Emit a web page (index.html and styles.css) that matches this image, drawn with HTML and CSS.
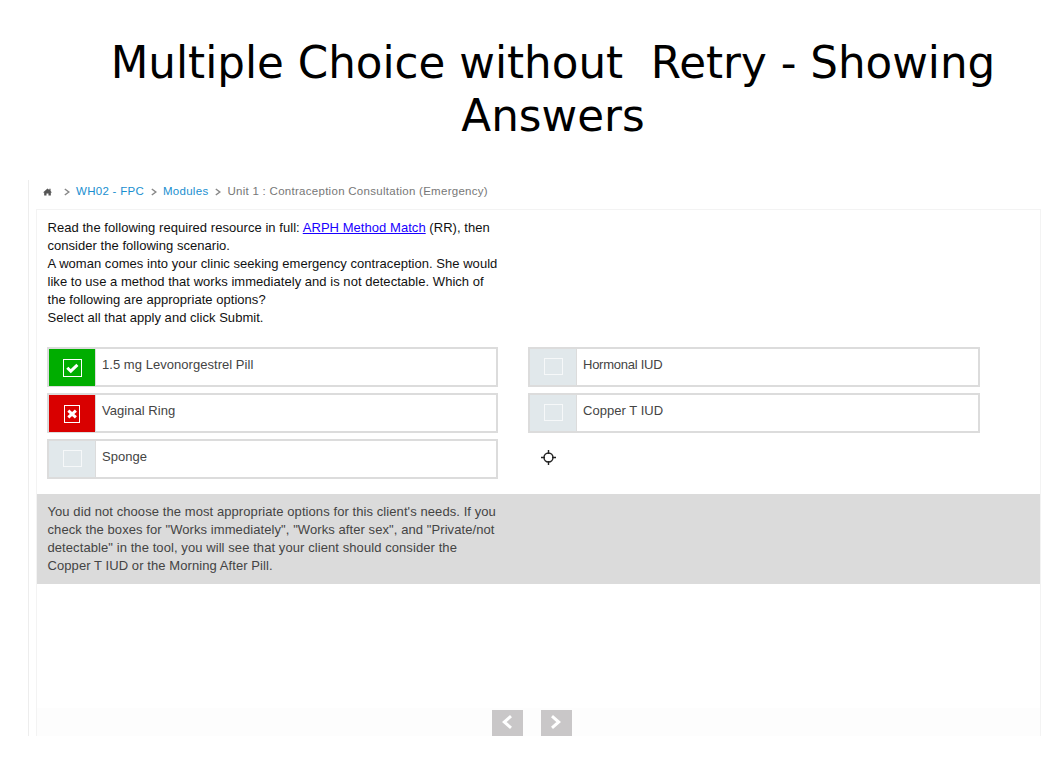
FILE: index.html
```html
<!DOCTYPE html>
<html lang="en">

<head>
  <meta charset="UTF-8">
  <meta name="viewport" content="width=device-width, initial-scale=1.0">
  <title>Multiple Choice</title>
  <link rel="stylesheet" href="styles.css">
</head>

<body>
  <h1>Multiple Choice without&nbsp; Retry - Showing<br>Answers</h1>
  <main>
    <nav class="crumbs">
      <svg class="home" viewBox="0 0 10 8"><path d="M5 0 0 4.6h1.3V8h2.6V5.6h2.2V8h2.6V4.6H10L8.4 3V.3H7v1.4z"/></svg>
      <svg class="sep" viewBox="0 0 6 8"><path d="M.8 1 4.8 4 .8 7"/></svg>
      <a>WH02 - FPC</a>
      <svg class="sep" viewBox="0 0 6 8"><path d="M.8 1 4.8 4 .8 7"/></svg>
      <a>Modules</a>
      <svg class="sep" viewBox="0 0 6 8"><path d="M.8 1 4.8 4 .8 7"/></svg>
      <span>Unit 1 : Contraception Consultation (Emergency)</span>
    </nav>
    <section class="panel">
      <div class="question">
        <span class="wide">Read the following required resource in full: <a href="#">ARPH Method Match</a> (RR), then</span><br>
        consider the following scenario.<br>
        A woman comes into your clinic seeking emergency contraception. She would<br>
        like to use a method that works immediately and is not detectable. Which of<br>
        the following are appropriate options?<br>
        Select all that apply and click Submit.
      </div>
      <div class="options">
        <div class="option right">
          <div class="mark"><svg viewBox="0 0 19 18"><rect x=".5" y=".5" width="18" height="17"/><path d="m4.3 8.7 3.5 3.5 6.6-6.4"/></svg></div>
          <p>1.5 mg Levonorgestrel Pill</p>
        </div>
        <div class="option">
          <div class="mark"><svg viewBox="0 0 19 18"><rect x=".5" y=".5" width="18" height="16"/></svg></div>
          <p class="narrow">Hormonal IUD</p>
        </div>
        <div class="option wrong">
          <div class="mark"><svg viewBox="0 0 19 18"><rect x="1.5" y=".5" width="15" height="17"/><path d="m5.3 5.6 7.6 6.8m0-6.8-7.6 6.8"/></svg></div>
          <p>Vaginal Ring</p>
        </div>
        <div class="option">
          <div class="mark"><svg viewBox="0 0 19 18"><rect x=".5" y=".5" width="18" height="16"/></svg></div>
          <p>Copper T IUD</p>
        </div>
        <div class="option">
          <div class="mark"><svg viewBox="0 0 19 18"><rect x=".5" y=".5" width="18" height="16"/></svg></div>
          <p>Sponge</p>
        </div>
        <svg class="target" viewBox="0 0 15 15"><circle cx="7.5" cy="7.5" r="4.5"/><path d="M7.5 0v4M7.5 11v4M0 7.5h4M11 7.5h4"/></svg>
      </div>
      <div class="feedback">
        You did not choose the most appropriate options for this client's needs. If you<br>
        check the boxes for "Works immediately", "Works after sex", and "Private/not<br>
        detectable" in the tool, you will see that your client should consider the<br>
        Copper T IUD or the Morning After Pill.
      </div>
      <div class="pager">
        <button><svg viewBox="0 0 12 14"><path d="M10 1.2 3.3 7l6.7 5.8"/></svg></button>
        <button><svg viewBox="0 0 12 14"><path d="M2 1.2 8.7 7 2 12.8"/></svg></button>
      </div>
    </section>
  </main>
</body>

</html>
```
FILE: styles.css
```css
* {
  margin: 0;
  padding: 0;
  box-sizing: border-box;
}
body {
  background-color: white;
  font-family: "Liberation Sans", Arial, sans-serif;
  font-size: 13px;
  line-height: 18px;
  overflow: hidden;
}
h1 {
  height: 180px;
  padding: 37px 0 0 51px;
  font: 43.6px/53px "DejaVu Sans", sans-serif;
  color: black;
  text-align: center;
  white-space: nowrap;
}
main {
  display: flex;
  flex-direction: column;
  width: 1013px;
  height: 556px;
  margin-left: 28px;
  padding-left: 7px;
  border-left: 1px solid #ededed;
}
.crumbs {
  display: flex;
  align-items: center;
  height: 29px;
  padding: 0 0 7px 7px;
  font-size: 11.5px;
  letter-spacing: .28px;
  color: #777;
  white-space: nowrap;
}
.crumbs a {
  color: #1a8fd0;
}
.home {
  width: 9px;
  height: 8px;
  margin: 2px 12px 0 0;
  fill: #555;
}
.sep {
  width: 6px;
  height: 8px;
  margin: 1px 6px 0 0;
  fill: none;
  stroke: #888;
  stroke-width: 1.5;
}
.crumbs a + .sep {
  margin-left: 7px;
}
.panel {
  display: flex;
  flex-direction: column;
  flex: 1;
  border: 1px solid #f3f3f3;
  border-bottom: none;
}
.question {
  padding: 9px 10px 0 10.5px;
  color: #111;
  letter-spacing: .035px;
  white-space: nowrap;
}
.wide {
  letter-spacing: .05px;
}
.question a {
  color: #1a00ff;
}
.options {
  display: grid;
  grid-template-columns: 451px 452px;
  gap: 6px 30px;
  padding: 20px 10px 15px;
}
.option {
  display: flex;
  height: 40px;
  border: 2px solid #dcdcdc;
}
.mark {
  display: flex;
  justify-content: center;
  align-items: center;
  width: 47px;
  background-color: #e1e8eb;
  border-right: 1px solid #dcdcdc;
}
.mark svg {
  width: 19px;
  height: 18px;
  fill: none;
  stroke: #f6f8f9;
}
.mark path {
  stroke-width: 3;
}
/* answered marks cover the bottom border */
.right .mark, .wrong .mark {
  height: 37px;
}
.right .mark {
  background-color: #00ad00;
}
.wrong .mark {
  background-color: #d90000;
}
.right svg, .wrong svg {
  margin-top: 1px;
  stroke: white;
}
.option p {
  padding: 7px 6px;
  color: #444;
  letter-spacing: .04px;
}
.option .narrow {
  letter-spacing: -.25px;
}
.target {
  width: 15px;
  height: 15px;
  margin: 11px 0 0 13px;
  fill: none;
  stroke: #222;
  stroke-width: 1.4;
}
.feedback {
  height: 90px;
  padding: 9px 10px 9px 10.5px;
  background-color: #dbdbdb;
  color: #444;
  letter-spacing: .08px;
  white-space: nowrap;
}
.pager {
  display: flex;
  justify-content: center;
  gap: 18px;
  margin-top: auto;
  padding: 2px 14px 0 0;
  background-color: #fdfdfd;
}
.pager button {
  width: 31px;
  height: 26px;
  border: none;
  background-color: #c9c7c8;
}
.pager svg {
  display: block;
  width: 12px;
  height: 14px;
  margin: -2px auto 0;
  fill: none;
  stroke: white;
  stroke-width: 3;
}
```
